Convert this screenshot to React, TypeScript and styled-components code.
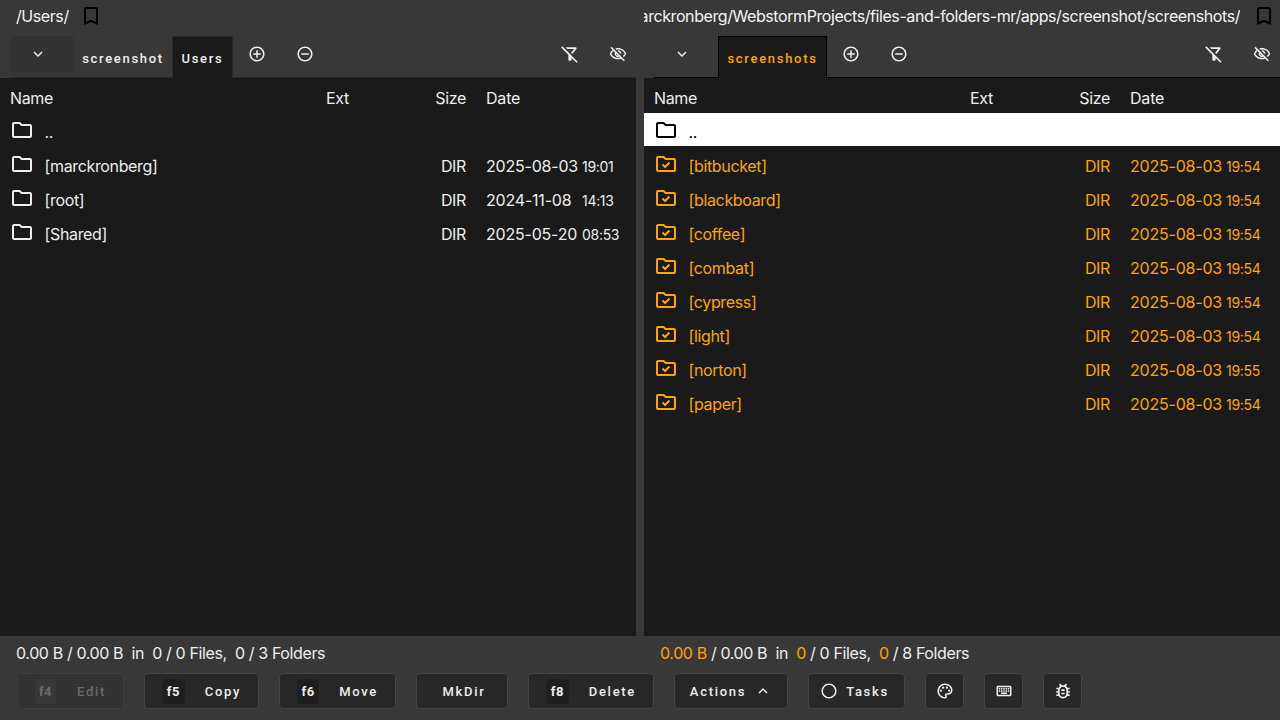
import styled, { createGlobalStyle } from "styled-components";
import {
  MdKeyboardArrowDown,
  MdKeyboardArrowUp,
  MdOutlineAddCircleOutline,
  MdOutlineBookmarkBorder,
  MdOutlineBugReport,
  MdOutlineCircle,
  MdOutlineFilterAltOff,
  MdOutlineFolder,
  MdOutlineKeyboard,
  MdOutlinePalette,
  MdOutlineRemoveCircleOutline,
  MdOutlineVisibilityOff,
} from "react-icons/md";

const Orange = "#ffa500";
const Chrome = "#383838";
const Surface = "#1a1a1a";

const GlobalStyle = createGlobalStyle`
  html, body { margin: 0; padding: 0; background: ${Chrome}; }
  body { font-family: Inter, "Liberation Sans", sans-serif; color: #eeeeee; overflow: hidden; }
`;

const Shell = styled.div`
  display: flex;
  flex-direction: column;
  width: 1280px;
  height: 720px;
  overflow: hidden;
`;

const Panes = styled.div`
  display: grid;
  grid-template-columns: 636px 636px;
  column-gap: 8px;
  height: 636px;
`;

const Pane = styled.section`
  display: flex;
  flex-direction: column;
  min-width: 0;
`;

const PathRow = styled.div`
  display: flex;
  align-items: center;
  height: 32px;
  overflow: hidden;
`;

const PathLabel = styled.div<{ $fill?: boolean }>`
  display: flex;
  justify-content: flex-end;
  ${(p) => (p.$fill ? "flex: 1;" : "padding-left: 16px;")}
  min-width: 0;
  overflow: hidden;
  white-space: nowrap;
  font-size: 16px;
  line-height: 32px;
  letter-spacing: -0.42px;
  color: #f5f5f5;
`;

const PathText = styled.span`
  flex: none;
`;

const BookmarkIcon = styled(MdOutlineBookmarkBorder)<{ $tail?: boolean }>`
  flex: none;
  margin: 0 ${(p) => (p.$tail ? 4 : 0)}px 0 ${(p) => (p.$tail ? 12 : 10)}px;
  color: #000;
`;

const TabBar = styled.div<{ $active?: boolean }>`
  display: flex;
  align-items: flex-start;
  height: 41px;
  margin: 4px 0 0 10px;
  border-bottom: 1px solid ${(p) => (p.$active ? "#000" : "#2a2a2a")};
`;

const Chevron = styled.button<{ $plain?: boolean }>`
  display: flex;
  align-items: center;
  justify-content: center;
  flex: none;
  width: 64px;
  height: 36px;
  padding: 0 8px 0 0;
  border: 0;
  border-radius: 4px;
  background: ${(p) => (p.$plain ? "transparent" : "#333333")};
  color: #eeeeee;
`;

const Tab = styled.div<{ $width: number; $selected?: boolean; $active?: boolean }>`
  display: flex;
  align-items: center;
  justify-content: center;
  flex: none;
  box-sizing: border-box;
  width: ${(p) => p.$width}px;
  height: 42px;
  padding-top: 2px;
  font-family: Roboto, sans-serif;
  font-size: 13px;
  font-weight: 500;
  letter-spacing: 1.7px;
  color: ${(p) => (p.$selected && p.$active ? Orange : "#eeeeee")};
  background: ${(p) => (p.$selected ? Surface : "transparent")};
  border: 1px solid ${(p) => (p.$selected ? (p.$active ? "#000" : "#2a2a2a") : "transparent")};
  border-bottom: 0;
`;

const IconButton = styled.button`
  display: flex;
  align-items: center;
  justify-content: center;
  width: 48px;
  height: 36px;
  flex: none;
  padding: 0;
  border: 0;
  background: transparent;
  color: #eeeeee;
`;

const EdgeIconButton = styled(IconButton)`
  margin-right: -6px;
`;

const Push = styled.div`
  flex: 1;
`;

const List = styled.div`
  flex: 1;
  background: ${Surface};
`;

const Row = styled.div<{ $tone?: "cursor" | "selected" }>`
  display: grid;
  grid-template-columns: 316px 50px 90px 1fr;
  align-items: center;
  box-sizing: border-box;
  height: 34px;
  padding: 4px 0 0 10px;
  font-size: 16px;
  white-space: nowrap;
  letter-spacing: -0.35px;
  background: ${(p) => (p.$tone === "cursor" ? "#fff" : "transparent")};
  color: ${(p) => (p.$tone === "cursor" ? "#000" : p.$tone === "selected" ? Orange : "#eeeeee")};
`;

const HeadRow = styled(Row)`
  height: 35px;
  padding-top: 4px;
`;

const UpRow = styled(Row)`
  height: 33px;
  margin-bottom: 1px;
  padding-top: 5px;
`;

const NameCell = styled.div`
  display: flex;
  align-items: center;
`;

const NameIcon = styled.span`
  display: flex;
  margin: -4px 0 0 0;
  width: 34.5px;
`;

const SizeCell = styled.div`
  text-align: right;
`;

const DateCell = styled.div`
  display: flex;
  align-items: baseline;
  padding-left: 20px;
  letter-spacing: -0.2px;
`;

const DateText = styled.span`
  width: 96px;
`;

const Time = styled.span`
  font-size: 14px;
  letter-spacing: -0.3px;
`;

const Footer = styled.footer`
  display: flex;
  flex-direction: column;
  height: 84px;
`;

const StatusRow = styled.div`
  display: grid;
  grid-template-columns: 644px 636px;
  height: 34px;
  margin-bottom: 3px;
  align-items: center;
  font-size: 16px;
  letter-spacing: -0.38px;
  white-space: pre;
`;

const Status = styled.div`
  padding-left: 16px;
`;

const Hit = styled.span`
  color: ${Orange};
`;

const Actions = styled.div`
  display: flex;
  align-items: flex-start;
  gap: 20px;
  padding-left: 17px;
`;

const ActionButton = styled.button<{ $width: number; $muted?: boolean; $center?: boolean }>`
  display: flex;
  align-items: center;
  justify-content: ${(p) => (p.$center ? "center" : "flex-start")};
  gap: 8px;
  box-sizing: border-box;
  width: ${(p) => p.$width}px;
  height: 36px;
  padding: 0 ${(p) => (p.$center ? 0 : 17)}px;
  border: 1px solid ${(p) => (p.$muted ? "#3e3e3e" : "#444444")};
  border-radius: 4px;
  background: ${(p) => (p.$muted ? "#333333" : "#282828")};
  color: ${(p) => (p.$muted ? "#6b6b6b" : "#eeeeee")};
  font-family: Roboto, sans-serif;
  font-size: 13px;
  font-weight: 500;
  letter-spacing: 1.7px;
`;

const WideLabel = styled.span`
  padding-left: 4px;
`;

const TasksLabel = styled.span`
  margin-right: 4px;
`;

const Key = styled.kbd<{ $muted?: boolean; $extra?: number }>`
  display: flex;
  align-items: center;
  justify-content: center;
  width: 25px;
  height: 25px;
  margin-right: ${(p) => 12 + (p.$extra ?? 0)}px;
  border-radius: 4px;
  background: ${(p) => (p.$muted ? "#383838" : "#1e1e1e")};
  font-family: Roboto, sans-serif;
  font-size: 13px;
  font-weight: 700;
  letter-spacing: 0.5px;
`;

function FolderCheckIcon() {
  return (
    <svg width={24} height={24} viewBox="0 0 24 24">
      <path
        fill="currentColor"
        d="M9.17 6l2 2H20v10H4V6h5.17M10 4H4c-1.1 0-1.99.9-1.99 2L2 18c0 1.1.9 2 2 2h16c1.1 0 2-.9 2-2V8c0-1.1-.9-2-2-2h-8l-2-2z"
      />
      <path d="M8.5 12.5l2.5 2.5 4.5-4.5" fill="none" stroke="currentColor" strokeWidth={2} />
    </svg>
  );
}

type Entry = { name: string; date: string; time: string };

const leftEntries: Entry[] = [
  { name: "[marckronberg]", date: "2025-08-03", time: "19:01" },
  { name: "[root]", date: "2024-11-08", time: "14:13" },
  { name: "[Shared]", date: "2025-05-20", time: "08:53" },
];

const rightEntries: Entry[] = [
  "bitbucket",
  "blackboard",
  "coffee",
  "combat",
  "cypress",
  "light",
  "norton",
  "paper",
].map((n) => ({
  name: `[${n}]`,
  date: "2025-08-03",
  time: n === "norton" ? "19:55" : "19:54",
}));

function Listing({ entries, selected, cursor }: { entries: Entry[]; selected?: boolean; cursor?: boolean }) {
  return (
    <List>
      <HeadRow>
        <div>Name</div>
        <div>Ext</div>
        <SizeCell>Size</SizeCell>
        <DateCell>Date</DateCell>
      </HeadRow>
      <UpRow $tone={cursor ? "cursor" : undefined}>
        <NameCell>
          <NameIcon>
            <MdOutlineFolder size={24} />
          </NameIcon>
          ..
        </NameCell>
      </UpRow>
      {entries.map((e) => (
        <Row key={e.name} $tone={selected ? "selected" : undefined}>
          <NameCell>
            <NameIcon>{selected ? <FolderCheckIcon /> : <MdOutlineFolder size={24} />}</NameIcon>
            {e.name}
          </NameCell>
          <div />
          <SizeCell>DIR</SizeCell>
          <DateCell>
            <DateText>{e.date}</DateText>
            <Time>{e.time}</Time>
          </DateCell>
        </Row>
      ))}
    </List>
  );
}

function PaneTools() {
  return (
    <>
      <IconButton>
        <MdOutlineAddCircleOutline size={18} />
      </IconButton>
      <IconButton>
        <MdOutlineRemoveCircleOutline size={18} />
      </IconButton>
      <Push />
      <IconButton>
        <MdOutlineFilterAltOff size={20} />
      </IconButton>
      <EdgeIconButton>
        <MdOutlineVisibilityOff size={18} />
      </EdgeIconButton>
    </>
  );
}

export default function App() {
  return (
    <Shell>
      <GlobalStyle />
      <Panes>
        <Pane>
          <PathRow>
            <PathLabel>
              <PathText>/Users/</PathText>
            </PathLabel>
            <BookmarkIcon size={24} />
          </PathRow>
          <TabBar>
            <Chevron>
              <MdKeyboardArrowDown size={18} />
            </Chevron>
            <Tab $width={98}>screenshot</Tab>
            <Tab $width={61} $selected>Users</Tab>
            <PaneTools />
          </TabBar>
          <Listing entries={leftEntries} />
        </Pane>
        <Pane>
          <PathRow>
            <PathLabel $fill>
              <PathText>/Users/marckronberg/WebstormProjects/files-and-folders-mr/apps/screenshot/screenshots/</PathText>
            </PathLabel>
            <BookmarkIcon size={24} $tail />
          </PathRow>
          <TabBar $active>
            <Chevron $plain>
              <MdKeyboardArrowDown size={18} />
            </Chevron>
            <Tab $width={109} $selected $active>screenshots</Tab>
            <PaneTools />
          </TabBar>
          <Listing entries={rightEntries} selected cursor />
        </Pane>
      </Panes>
      <Footer>
        <StatusRow>
          <Status>0.00 B / 0.00 B  in  0 / 0 Files,  0 / 3 Folders</Status>
          <Status>
            <Hit>0.00 B</Hit> / 0.00 B  in  <Hit>0</Hit> / 0 Files,  <Hit>0</Hit> / 8 Folders
          </Status>
        </StatusRow>
        <Actions>
          <ActionButton $width={107} $muted>
            <Key $muted $extra={1}>f4</Key>Edit
          </ActionButton>
          <ActionButton $width={115}>
            <Key>f5</Key>Copy
          </ActionButton>
          <ActionButton $width={117}>
            <Key>f6</Key>Move
          </ActionButton>
          <ActionButton $width={92} $center>
            <WideLabel>MkDir</WideLabel>
          </ActionButton>
          <ActionButton $width={126}>
            <Key>f8</Key>Delete
          </ActionButton>
          <ActionButton $width={114} $center>
            Actions <MdKeyboardArrowUp size={18} />
          </ActionButton>
          <ActionButton $width={97} $center>
            <MdOutlineCircle size={18} />
            <TasksLabel>Tasks</TasksLabel>
          </ActionButton>
          <ActionButton $width={39} $center>
            <MdOutlinePalette size={18} />
          </ActionButton>
          <ActionButton $width={39} $center>
            <MdOutlineKeyboard size={18} />
          </ActionButton>
          <ActionButton $width={39} $center>
            <MdOutlineBugReport size={20} />
          </ActionButton>
        </Actions>
      </Footer>
    </Shell>
  );
}
